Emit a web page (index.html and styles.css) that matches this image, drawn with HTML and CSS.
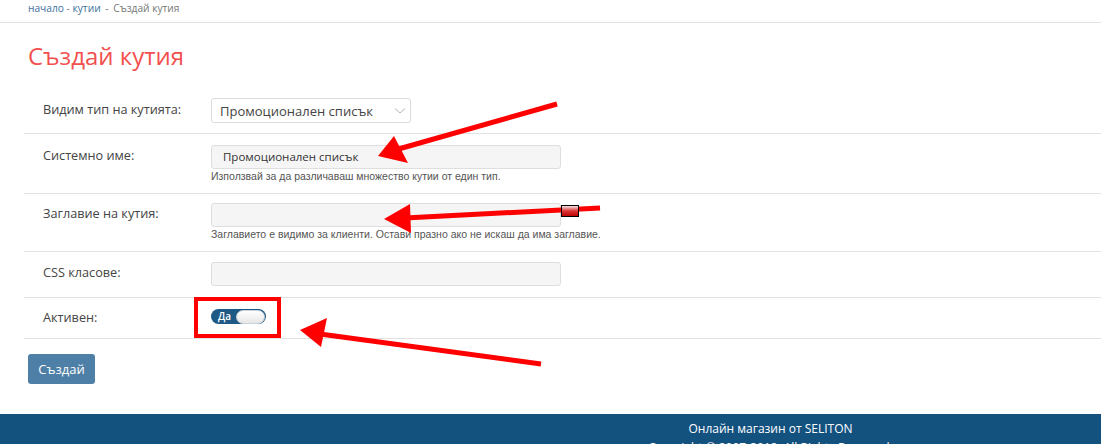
FILE: index.html
```html
<!DOCTYPE html>
<html lang="bg">
<head>
    <meta charset="UTF-8">
    <title>Създай кутия</title>
    <link rel="stylesheet" href="styles.css">
</head>
<body>
    <div class="breadcrumb">
        <a href="#">начало</a> - <a href="#">кутии</a> <span class="sep">-</span> <span class="current">Създай кутия</span>
    </div>

    <div class="content">
        <h1 class="page-title">Създай кутия</h1>

        <div class="form-table">
            <div class="form-row row-type">
                <label class="form-label">Видим тип на кутията:</label>
                <div class="form-field">
                    <div class="select-box">
                        <span>Промоционален списък</span>
                        <svg class="chevron" width="12" height="8" viewBox="0 0 12 8"><path d="M1 1.5 L6 6 L11 1.5" fill="none" stroke="#b5b5b5" stroke-width="1"/></svg>
                    </div>
                </div>
            </div>
            <div class="form-row row-name">
                <label class="form-label">Системно име:</label>
                <div class="form-field">
                    <div class="text-input">Промоционален списък</div>
                    <div class="help">Използвай за да различаваш множество кутии от един тип.</div>
                </div>
            </div>
            <div class="form-row row-title">
                <label class="form-label">Заглавие на кутия:</label>
                <div class="form-field">
                    <div class="text-input"></div>
                    <div class="help">Заглавието е видимо за клиенти. Остави празно ако не искаш да има заглавие.</div>
                </div>
            </div>
            <div class="form-row row-css">
                <label class="form-label">CSS класове:</label>
                <div class="form-field">
                    <div class="text-input"></div>
                </div>
            </div>
            <div class="form-row row-active">
                <label class="form-label">Активен:</label>
                <div class="form-field">
                    <div class="toggle">
                        <span class="toggle-text">Да</span>
                        <span class="toggle-knob"></span>
                    </div>
                </div>
            </div>
        </div>

        <button class="btn-create">Създай</button>
    </div>

    <footer class="footer">
        <div class="footer-inner">
            <div class="footer-title">Онлайн магазин от SELITON</div>
            <div class="footer-copy">Copyright © 2007-2018. All Rights Reserved.</div>
        </div>
    </footer>

    <!-- annotation arrows drawn over the screenshot -->
    <svg class="annotations" width="1101" height="444" viewBox="0 0 1101 444">
        <defs>
            <linearGradient id="boxfill" x1="0" y1="0" x2="0" y2="1">
                <stop offset="0" stop-color="#f4f4f4"/>
                <stop offset="0.5" stop-color="#d33"/>
                <stop offset="1" stop-color="#b00"/>
            </linearGradient>
        </defs>
        <line x1="557" y1="104" x2="395" y2="150" stroke="#ff0000" stroke-width="5"/>
        <polygon points="378,156 394,136 408,163" fill="#ff0000"/>

        <line x1="600" y1="208" x2="405" y2="218" stroke="#ff0000" stroke-width="5"/>
        <polygon points="384,219 410,204 411,233" fill="#ff0000"/>
        <rect x="561.5" y="205.5" width="17" height="11" fill="url(#boxfill)" stroke="#000" stroke-width="1"/>

        <rect x="196" y="299" width="83" height="37" fill="none" stroke="#ff0000" stroke-width="4"/>

        <line x1="541" y1="364" x2="320" y2="334" stroke="#ff0000" stroke-width="5"/>
        <polygon points="300,330 327,318 321,347" fill="#ff0000"/>
    </svg>
</body>
</html>
```

FILE: styles.css
```css
body {
    margin: 0;
    padding: 0;
    font-family: "Open Sans", sans-serif;
    color: #444;
    background-color: #fff;
    position: relative;
    width: 1101px;
    height: 444px;
    overflow: hidden;
}

.breadcrumb {
    font-size: 10.2px;
    color: #777;
    padding: 0 0 0 28px;
    height: 22px;
    line-height: 16px;
    border-bottom: 1px solid #e2e2e2;
}

.breadcrumb a {
    color: #3d72a0;
    text-decoration: none;
}

.breadcrumb .sep {
    margin: 0 2px;
}

.content {
    padding: 0 0 0 24px;
}

.page-title {
    margin: 16px 0 0 4px;
    font-size: 24px;
    font-weight: 400;
    line-height: 34px;
    color: #f2504f;
}

.form-table {
    margin-top: 17px;
}

.form-row {
    display: grid;
    grid-template-columns: 187px 1fr;
    border-bottom: 1px solid #e2e2e2;
}

.form-label {
    padding-left: 19px;
    font-size: 12.7px;
    line-height: 20px;
    color: #444;
}

.row-type {
    padding: 8px 0 10px;
}

.row-type .form-label {
    padding-top: 1px;
}

.row-name {
    padding: 11px 0 10px;
}

.row-title {
    padding: 9px 0 10px;
}

.row-css {
    padding: 10px 0 11px;
}

.row-active {
    padding: 11px 0 13px;
}

.row-active .form-label {
    padding-top: 0;
    line-height: 16px;
}

.select-box {
    border: 1px solid #dcdcdc;
    border-radius: 3px;
    display: flex;
    align-items: center;
    justify-content: space-between;
    padding: 0 0 0 8px;
    box-sizing: border-box;
    width: 200px;
    height: 25px;
    font-size: 13px;
    color: #444;
}

.chevron {
    margin-right: 4px;
}

.text-input {
    width: 350px;
    height: 24px;
    box-sizing: border-box;
    background-color: #f5f5f5;
    border: 1px solid #dedede;
    border-radius: 3px;
    padding: 0 11px;
    font-size: 11.5px;
    line-height: 22px;
    color: #333;
}

.help {
    font-family: "Liberation Sans", Arial, sans-serif;
    font-size: 10.5px;
    line-height: 13px;
    margin-top: 1px;
    color: #555;
}

.toggle {
    width: 55px;
    height: 15px;
    border-radius: 8px;
    background-color: #1f5a86;
    display: flex;
    align-items: center;
    justify-content: space-between;
    box-sizing: border-box;
    padding: 0 1px 0 7px;
}

.toggle-text {
    color: #fff;
    font-size: 10px;
    font-weight: 600;
    line-height: 15px;
}

.toggle-knob {
    width: 27px;
    height: 12px;
    border-radius: 7px;
    background: linear-gradient(#ffffff, #e6e6e6);
    border: 1px solid #c9d3dc;
}

.btn-create {
    margin: 15px 0 0 4px;
    width: 67px;
    height: 30px;
    background-color: #4e7fa6;
    border: none;
    border-radius: 3px;
    color: #fff;
    font-family: "Open Sans", sans-serif;
    font-size: 13px;
    padding: 0;
}

.footer {
    position: absolute;
    top: 414px;
    left: 0;
    width: 1101px;
    height: 40px;
    background-color: #13517f;
}

.footer-inner {
    padding: 6px 0 0 440px;
    text-align: center;
    color: #fff;
    font-size: 12px;
    line-height: 17px;
}

.footer-title {
    font-weight: 500;
}

.footer-copy {
    margin-top: 2px;
}

.annotations {
    position: absolute;
    top: 0;
    left: 0;
    pointer-events: none;
}
```
